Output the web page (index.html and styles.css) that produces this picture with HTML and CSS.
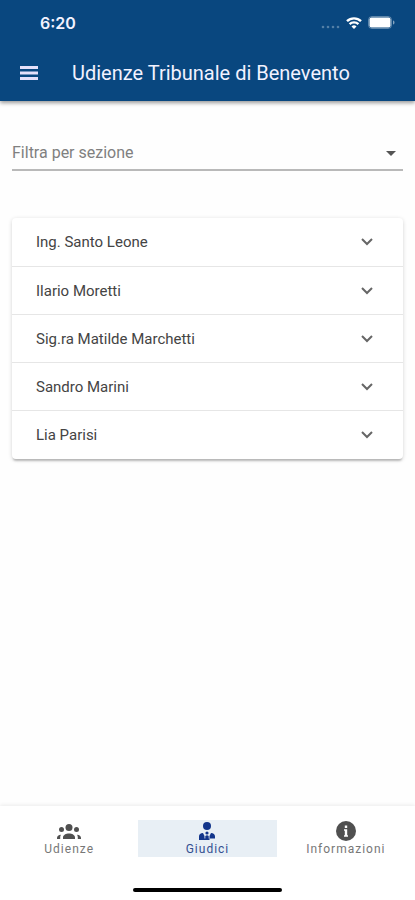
FILE: index.html
```html
<!DOCTYPE html>
<html lang="it">
<head>
<meta charset="utf-8">
<meta name="viewport" content="width=device-width, initial-scale=1">
<title>Udienze Tribunale di Benevento</title>
<link rel="stylesheet" href="styles.css">
</head>
<body>
<header class="header">
  <div class="status">
    <span class="time">6:20</span>
    <div class="indicators">
      <svg width="20" height="4" viewBox="0 0 20 4" fill="#fff" opacity=".3"><circle cx="3" cy="2" r="1.300"/><circle cx="8" cy="2" r="1.300"/><circle cx="13" cy="2" r="1.300"/><circle cx="18" cy="2" r="1.300"/></svg>
      <svg width="16" height="12" viewBox="0 0 16 12" fill="none" stroke="#fff" stroke-width="2.4"><path d="M1 4.200a10 10 0 0 1 14 0M3.600 7.200a6.200 6.200 0 0 1 8.800 0"/><path d="M8 12 5.500 9.400a3.600 3.600 0 0 1 5 0z" fill="#fff" stroke="none"/></svg>
      <svg width="27" height="13" viewBox="0 0 27 13"><rect x=".5" y=".5" width="23" height="12" rx="3.500" fill="none" stroke="#fff" stroke-opacity=".35"/><rect x="1.500" y="1.500" width="21" height="10" rx="2" fill="#fff"/><path d="M25 4.500c2 .6 2 3.400 0 4z" fill="#fff" fill-opacity=".5"/></svg>
    </div>
  </div>
  <div class="toolbar">
    <button class="menu" type="button" aria-label="Menu"><svg width="18" height="14" viewBox="0 0 18 14" fill="#e4e0fa"><path d="M0 0h18v3H0zM0 5.500h18v3H0zM0 11h18v3H0z"/></svg></button>
    <h1 class="title">Udienze Tribunale di Benevento</h1>
  </div>
</header>
<main class="content">
  <div class="filter">
    <select class="select" aria-label="Filtra per sezione"><option>Filtra per sezione</option></select>
    <svg width="10" height="5" viewBox="0 0 10 5" fill="#555"><path d="M0 0h10L5 5z"/></svg>
  </div>
  <div class="panels">
    <button class="panel" type="button"><span>Ing. Santo Leone</span><svg class="chevron" width="12" height="8" viewBox="0 0 12 8"><path d="m1 1 5 5 5-5"/></svg></button>
    <button class="panel" type="button"><span>Ilario Moretti</span><svg class="chevron" width="12" height="8" viewBox="0 0 12 8"><path d="m1 1 5 5 5-5"/></svg></button>
    <button class="panel" type="button"><span>Sig.ra Matilde Marchetti</span><svg class="chevron" width="12" height="8" viewBox="0 0 12 8"><path d="m1 1 5 5 5-5"/></svg></button>
    <button class="panel" type="button"><span>Sandro Marini</span><svg class="chevron" width="12" height="8" viewBox="0 0 12 8"><path d="m1 1 5 5 5-5"/></svg></button>
    <button class="panel" type="button"><span>Lia Parisi</span><svg class="chevron" width="12" height="8" viewBox="0 0 12 8"><path d="m1 1 5 5 5-5"/></svg></button>
  </div>
</main>
<footer class="footer">
  <nav class="tabs">
    <a class="tab" href="#udienze"><svg width="24" height="22" viewBox="0 0 24 22" fill="#505050"><circle cx="12" cy="7.500" r="3.500"/><circle cx="4.500" cy="9.500" r="2.500"/><circle cx="19.500" cy="9.500" r="2.500"/><path d="M6 19v-1.500c0-2.500 3-4 6-4s6 1.500 6 4V19zM0 19v-1c0-2 1.500-3 4-3.300-.6.900-.8 1.800-.8 2.800V19zM24 19v-1c0-2-1.500-3-4-3.300.6.900.8 1.800.8 2.800V19z"/></svg><span>Udienze</span></a>
    <a class="tab active" href="#giudici" aria-current="page"><svg width="24" height="22" viewBox="0 0 24 22" fill="#12358b"><circle cx="12" cy="6" r="4"/><circle cx="12" cy="13" r="1.600"/><path d="M4 20v-3.500c0-2 1.500-3.500 4-3.500l1.500 3v4zM20 20v-3.500c0-2-1.500-3.500-4-3.500l-1.500 3v4zM10.300 20v-4q1.700-1.500 3.400 0v4zM4 18.500h16V20H4z"/></svg><span>Giudici</span></a>
    <a class="tab" href="#informazioni"><svg width="24" height="22" viewBox="0 0 24 22"><circle cx="12" cy="11" r="10" fill="#505050"/><path d="M10.800 5.500h2.400v2.400h-2.400zM10 9.300h3.200v6H14v1.500h-4v-1.500h.8v-4.500H10z" fill="#fff"/></svg><span>Informazioni</span></a>
  </nav>
  <div class="home-bar"></div>
</footer>
</body>
</html>
```
FILE: styles.css
```css
* {
  box-sizing: border-box;
}

body {
  margin: 0;
  min-height: 100vh;
  display: flex;
  flex-direction: column;
  background: #fefefe;
  font-family: Roboto, sans-serif;
  color: #444;
}

svg {
  display: block;
  flex: none;
}

button {
  border: 0;
  background: none;
  padding: 0;
  font: inherit;
  color: inherit;
}

.header {
  background: #09477f;
  color: #f2f2ff;
  box-shadow: 0 2px 4px rgba(0, 0, 0, 0.4);
}

.status {
  display: flex;
  justify-content: space-between;
  align-items: center;
  height: 45px;
  padding: 0 20px 0 40px;
}

.time {
  font: 600 16px/24px Inter, sans-serif;
}

.indicators {
  display: flex;
  align-items: center;
  gap: 6px;
}

.indicators svg:first-child {
  margin-top: 8px;
}

.toolbar {
  display: flex;
  align-items: center;
  gap: 34px;
  height: 56px;
  padding: 0 20px;
}

.title {
  margin: 0;
  font-size: 20px;
  font-weight: 400;
  line-height: 32px;
  white-space: nowrap;
}

.content {
  flex: 1;
  padding: 36px 12px;
}

.filter {
  display: flex;
  align-items: center;
  border-bottom: 2px solid #b9b9b9;
  padding-right: 7px;
}

.select {
  flex: 1;
  appearance: none;
  border: 0;
  padding: 0;
  height: 32px;
  background: none;
  font: 400 16px/24px Roboto, sans-serif;
  color: #808080;
}

.panels {
  margin-top: 47px;
  border-radius: 4px;
  background: #fff;
  box-shadow: 0 3px 2px -1px rgba(0, 0, 0, 0.2), 0 1px 4px rgba(0, 0, 0, 0.16);
}

.panel {
  display: flex;
  justify-content: space-between;
  align-items: center;
  width: 100%;
  height: 48px;
  padding: 0 30px 0 24px;
  border-bottom: 1px solid #e6e6e6;
  font-size: 15px;
  line-height: 20px;
}

.panel:first-child {
  height: 49px;
}

.panel:last-child {
  border-bottom-color: transparent;
}

.chevron {
  fill: none;
  stroke: #666;
  stroke-width: 2;
}

.footer {
  background: #fff;
  box-shadow: 0 -1px 4px rgba(0, 0, 0, 0.08);
  padding-top: 14px;
}

.tabs {
  display: grid;
  grid-template-columns: repeat(3, 1fr);
}

.tab {
  display: flex;
  flex-direction: column;
  align-items: center;
  height: 37px;
  font-size: 12px;
  line-height: 14px;
  letter-spacing: 1px;
  color: #777;
  text-decoration: none;
}

.active {
  background: #e8eff5;
  color: #344f91;
}

.home-bar {
  width: 36%;
  height: 4px;
  margin: 31px auto 8px;
  border-radius: 2px;
  background: #000;
}
```
